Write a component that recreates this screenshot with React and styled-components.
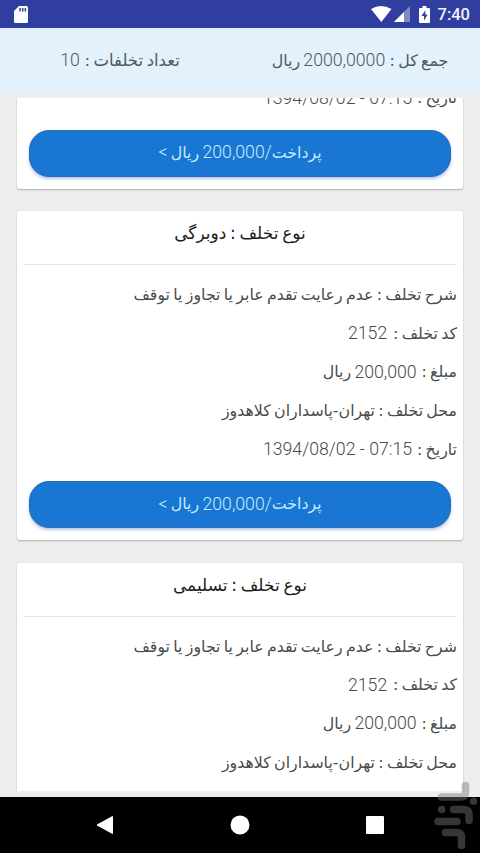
import React from "react";
import styled, { createGlobalStyle } from "styled-components";

const GlobalStyle = createGlobalStyle`
  * {
    box-sizing: border-box;
  }
  body {
    margin: 0;
    background: #000;
  }
`;
const Screen = styled.div`
  position: relative;
  display: flex;
  flex-direction: column;
  width: 480px;
  height: 853px;
  overflow: hidden;
  background: #eee;
  font-family: Roboto, "DejaVu Sans", sans-serif;
`;
const StatusBar = styled.header`
  display: flex;
  flex: none;
  align-items: center;
  justify-content: space-between;
  height: 28px;
  padding: 0 10px 0 14px;
  background: #303f9f;
`;
const StatusIcons = styled.div`
  display: flex;
  align-items: center;
`;
const Clock = styled.span`
  margin-left: 8px;
  padding-top: 2px;
  color: #f1f3fb;
  font-size: 16.5px;
  font-weight: 500;
  line-height: 26px;
`;
const Summary = styled.div`
  display: grid;
  flex: none;
  grid-template-columns: 1fr 1fr;
  align-items: center;
  height: 65px;
  padding-bottom: 1px;
  background: #e3f1fc;
  color: #4b5a63;
  direction: rtl;
`;
const Text = styled.p`
  display: flex;
  align-items: center;
  justify-content: ${({ $center }) => ($center ? "center" : "flex-start")};
  height: ${({ $height }) => $height || 38.6}px;
  margin: 0;
  font-size: 17.7px;
  font-weight: 350;
  white-space: pre;
`;
const Fa = styled.span`
  font-family: "DejaVu Sans", sans-serif;
  font-size: ${({ $size }) => $size || 15.8}px;
  font-weight: 400;
  word-spacing: -1.7px;
`;
const Num = styled.span`
  margin-right: ${({ $gap }) => $gap || 0}px;
  direction: ltr;
  unicode-bidi: isolate;
`;
const List = styled.main`
  flex: none;
  height: 693px;
  margin-top: 5px;
  padding: 0 17px;
  overflow: hidden;
`;
const Cards = styled.div`
  display: flex;
  flex-direction: column;
  gap: 22.5px;
`;
const Card = styled.section`
  height: ${({ $scrolled }) => ($scrolled ? 90.5 : 329)}px;
  padding: 0 6px;
  background: #fff;
  border-radius: ${({ $scrolled }) => ($scrolled ? "0 0 3px 3px" : "3px")};
  box-shadow: 0 1px 2px rgba(0, 0, 0, 0.28);
  direction: rtl;
`;
const Title = styled.div`
  height: 54px;
  padding-bottom: 8px;
  border-bottom: 1px solid #e6e6e6;
  color: #1c1c1c;
`;
const Details = styled.div`
  margin-top: ${({ $scrolled }) => ($scrolled ? -19.6 : 10.5)}px;
  color: #484c4e;
`;
const PayButton = styled.button`
  display: block;
  width: 422px;
  height: 47px;
  margin: 12.8px auto 0;
  padding: 0;
  border: 1px solid #2b6cb5;
  border-radius: 20px;
  background: #1976d2;
  box-shadow: 0 2px 3px rgba(40, 90, 200, 0.35);
  color: #c3ecff;
  font-family: inherit;
`;
const ButtonLabel = styled(Text)`
  padding-bottom: 2px;
`;
const NavBar = styled.nav`
  display: flex;
  flex: none;
  align-items: center;
  justify-content: space-between;
  height: 56px;
  margin-top: 6px;
  padding: 0 95px;
  background: #000;
`;
const Watermark = styled.svg`
  position: absolute;
  right: 0;
  bottom: 0;
`;

const fines = [
  { id: 1, type: "دوبرگی", scrolled: true },
  { id: 2, type: "دوبرگی" },
  { id: 3, type: "تسلیمی", open: true },
];

function FineCard({ type, scrolled, open }) {
  return (
    <Card $scrolled={scrolled}>
      {!scrolled && (
        <Title>
          <Text $center $height={44}>
            <Fa $size={17}>نوع تخلف : {type}</Fa>
          </Text>
        </Title>
      )}
      <Details $scrolled={scrolled}>
        {!scrolled && (
          <>
            <Text>
              <Fa>شرح تخلف : عدم رعایت تقدم عابر یا تجاوز یا توقف</Fa>
            </Text>
            <Text>
              <Fa>کد تخلف : </Fa>
              <Num $gap={2.5}>2152</Num>
            </Text>
            <Text>
              <Fa>مبلغ : </Fa>
              <Num $gap={1.5}>200,000</Num>
              <Fa> ریال</Fa>
            </Text>
            <Text>
              <Fa>محل تخلف : تهران-پاسداران کلاهدوز</Fa>
            </Text>
          </>
        )}
        {!open && (
          <Text>
            <Fa>تاریخ : </Fa>
            <Num $gap={1.5}>1394/08/02 - 07:15</Num>
          </Text>
        )}
      </Details>
      {!open && (
        <PayButton>
          <ButtonLabel $center $height={43}>
            <Fa>پرداخت</Fa>
            <Num>200,000/</Num>
            <Fa> ریال </Fa>
            <Num>&lt;</Num>
          </ButtonLabel>
        </PayButton>
      )}
    </Card>
  );
}

function App() {
  return (
    <Screen>
      <GlobalStyle />
      <StatusBar>
        <svg width="14" height="17" viewBox="0 0 14 17">
          <path fill="#fff" d="M5 0h7.500q1.500 0 1.500 1.500v14q0 1.500-1.500 1.500h-11Q0 17 0 15.500V5z" />
          <path stroke="#303f9f" strokeWidth="1.500" d="M6 2v3.500M8.700 2v3.500M11.400 2v3.500" />
        </svg>
        <StatusIcons>
          <svg width="48" height="18" viewBox="0 0 48 18">
            <path fill="#fff" d="M0 4Q10 -2 20.500 4L10.300 17z" />
            <path fill="#8089c4" d="M39 1v16H23z" />
            <path fill="#fff" d="M33 7v10H23z" />
          </svg>
          <svg width="11" height="17" viewBox="0 0 11 17">
            <path fill="#fff" d="M3.500 0h4v2H10q1 0 1 1v13q0 1-1 1H1q-1 0-1-1V3q0-1 1-1h2.500z" />
            <path fill="#303f9f" d="M6.500 4L2.500 10h2.500v4.500L8.700 8.500H6.200z" />
          </svg>
          <Clock>7:40</Clock>
        </StatusIcons>
      </StatusBar>
      <Summary>
        <Text $center>
          <Fa>جمع کل : </Fa>
          <Num $gap={1}>2000,0000</Num>
          <Fa> ریال</Fa>
        </Text>
        <Text $center>
          <Fa $size={16.5}>تعداد تخلفات : </Fa>
          <Num $gap={1}>10</Num>
        </Text>
      </Summary>
      <List>
        <Cards>
          {fines.map((fine) => (
            <FineCard key={fine.id} {...fine} />
          ))}
        </Cards>
      </List>
      <NavBar>
        <svg width="19" height="20" viewBox="0 0 19 20">
          <path fill="#fff" stroke="#fff" strokeLinejoin="round" d="M2 10L17.500 1.500v17z" />
        </svg>
        <svg width="20" height="20" viewBox="0 0 20 20">
          <circle cx="10" cy="10" r="9.500" fill="#fff" />
        </svg>
        <svg width="20" height="20" viewBox="0 0 20 20">
          <rect x="1" y="1" width="18" height="18" rx="1" fill="#fff" />
        </svg>
      </NavBar>
      <Watermark width="50" height="74" viewBox="430 779 50 74">
        <g fill="none" stroke="#777" strokeOpacity="0.45" strokeWidth="7.500" strokeLinecap="round" strokeLinejoin="round">
          <path d="M465.500 785.500v7q0 4.500-5 4.500h-19" />
          <path d="M473.500 801.200h.01M441.700 809.500h.01" />
          <path d="M453.500 809.500h10q5.500 0 5.500 5v6" />
          <path d="M438 821.500h19" />
          <path d="M445.500 832.500h11q5 0 5 5v8" />
        </g>
      </Watermark>
    </Screen>
  );
}

export default App;
